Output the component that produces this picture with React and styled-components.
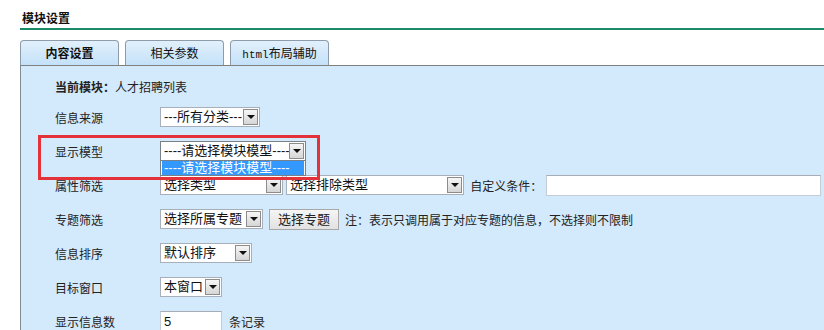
import styled, { createGlobalStyle } from 'styled-components'

const GlobalStyle = createGlobalStyle`
  html, body {
    margin: 0;
    padding: 0;
    background: #fff;
    overflow: hidden;
  }
  body {
    font-family: "Liberation Sans", "Noto Sans CJK SC", sans-serif;
    font-size: 12px;
    color: #222;
  }
`

const Page = styled.div`
  margin-left: 20px;
  width: 830px;
  padding-top: 10px;
`

const Title = styled.div`
  height: 18px;
  line-height: 18px;
  padding-left: 2px;
  font-weight: bold;
  font-size: 12px;
  color: #111;
  border-bottom: 2px solid #1b8a68;
`

const TabBar = styled.div`
  display: flex;
  gap: 6px;
  margin-top: 10px;
  height: 25px;
`

const Tab = styled.div`
  width: 97px;
  height: 24px;
  line-height: 26px;
  text-align: center;
  border: 1px solid #8d9cab;
  border-bottom: none;
  border-radius: 4px 4px 0 0;
  background: linear-gradient(#e2f0fc, #c4e1f8);
  font-size: 12px;
  font-weight: ${({ active }) => (active ? 'bold' : 'normal')};
  color: #111;
`

const Mono = styled.span`
  font-family: "Liberation Mono", monospace;
  font-size: 11px;
`

const Panel = styled.div`
  border-top: 1px solid #808080;
  border-left: 1px solid #808a94;
  background: #d3e9fc;
  padding: 6px 0 0 34px;
  height: 258px;
  overflow: hidden;
`

const Row = styled.div`
  position: relative;
  display: flex;
  align-items: center;
  height: ${({ h }) => h || 34}px;
`

const Label = styled.div`
  width: 105px;
  flex-shrink: 0;
  font-size: 12px;
  color: #222;
`

const Bold = styled.span`
  font-weight: bold;
`

const Controls = styled.div`
  display: flex;
  align-items: center;
  gap: ${({ gap }) => gap ?? 6}px;
`

const SelectBox = styled.div`
  position: relative;
  display: flex;
  align-items: center;
  box-sizing: border-box;
  width: ${({ w }) => w}px;
  height: 20px;
  background: #fff;
  border: 1px solid ${({ focused }) => (focused ? '#7a8088' : '#a7b0ba')};
`

const SelectText = styled.div`
  flex: 1;
  padding-left: 3px;
  font-size: 13px;
  line-height: 18px;
  white-space: nowrap;
  overflow: hidden;
  color: #111;
`

const Arrow = styled.div`
  box-sizing: border-box;
  width: 15px;
  height: 16px;
  margin-right: 1px;
  border: 1px solid #8c8c8c;
  background: linear-gradient(#f6f6f6, #d6d6d6);
  display: flex;
  align-items: center;
  justify-content: center;

  &::after {
    content: '';
    border-left: 4px solid transparent;
    border-right: 4px solid transparent;
    border-top: 4px solid #111;
  }
`

const DropList = styled.div`
  position: absolute;
  left: -1px;
  right: -1px;
  top: 19px;
  height: 15px;
  box-sizing: border-box;
  border: 1px solid #7a8088;
  border-top: none;
  background: #fff;
  padding: 0 1px 1px;
  z-index: 2;
`

const DropItem = styled.div`
  height: 14px;
  line-height: 14px;
  background: #3399ff;
  color: #fff;
  font-size: 13px;
  padding-left: 2px;
  white-space: nowrap;
`

const Highlight = styled.div`
  position: absolute;
  left: -17px;
  top: 1px;
  width: 282px;
  height: 45px;
  box-sizing: border-box;
  border: 3px solid #e4323a;
  z-index: 3;
  pointer-events: none;
`

const TextInput = styled.div`
  box-sizing: border-box;
  width: ${({ w }) => w}px;
  height: 21px;
  background: #fff;
  border: 1px solid #c4ccd6;
  border-top-color: #a6adb6;
  font-size: 13px;
  line-height: 19px;
  padding-left: 3px;
  color: #111;
`

const Button = styled.div`
  box-sizing: border-box;
  width: 70px;
  height: 21px;
  line-height: 19px;
  text-align: center;
  border: 1px solid #a8a8a8;
  background: linear-gradient(#f5f5f5, #e2e2e2);
  font-size: 13px;
  color: #222;
`

const Text = styled.span`
  font-size: 12px;
  color: #222;
  white-space: nowrap;
`

const Select = ({ w, children, focused, open }) => (
  <SelectBox w={w} focused={focused}>
    <SelectText>{children}</SelectText>
    <Arrow />
    {open && (
      <DropList>
        <DropItem>{open}</DropItem>
      </DropList>
    )}
  </SelectBox>
)

export default function App() {
  return (
    <>
      <GlobalStyle />
      <Page>
        <Title>模块设置</Title>
        <TabBar>
          <Tab active>内容设置</Tab>
          <Tab>相关参数</Tab>
          <Tab><Mono>html</Mono>布局辅助</Tab>
        </TabBar>
        <Panel>
          <Row h={28}>
            <Text><Bold>当前模块：</Bold>人才招聘列表</Text>
          </Row>
          <Row>
            <Label>信息来源</Label>
            <Select w={100}>---所有分类---</Select>
          </Row>
          <Row>
            <Highlight />
            <Label>显示模型</Label>
            <Select w={146} focused open="----请选择模块模型----">----请选择模块模型----</Select>
          </Row>
          <Row>
            <Label>属性筛选</Label>
            <Controls gap={3}>
              <Select w={123}>选择类型</Select>
              <Select w={178}>选择排除类型</Select>
              <Controls gap={4}>
                <Text>&nbsp;自定义条件：</Text>
                <TextInput w={275} />
              </Controls>
            </Controls>
          </Row>
          <Row>
            <Label>专题筛选</Label>
            <Controls>
              <Select w={103}>选择所属专题</Select>
              <Button>选择专题</Button>
              <Text>注：表示只调用属于对应专题的信息，不选择则不限制</Text>
            </Controls>
          </Row>
          <Row>
            <Label>信息排序</Label>
            <Select w={92}>默认排序</Select>
          </Row>
          <Row>
            <Label>目标窗口</Label>
            <Select w={62}>本窗口</Select>
          </Row>
          <Row>
            <Label>显示信息数</Label>
            <Controls gap={7}>
              <TextInput w={62}>5</TextInput>
              <Text>条记录</Text>
            </Controls>
          </Row>
        </Panel>
      </Page>
    </>
  )
}
